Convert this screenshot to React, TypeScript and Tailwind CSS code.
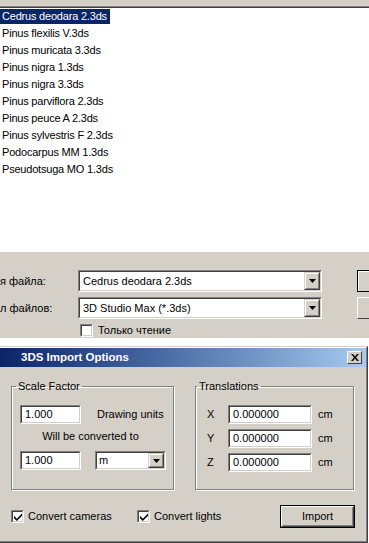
import React from "react";

const items = [
  "Cedrus deodara 2.3ds",
  "Pinus flexilis V.3ds",
  "Pinus muricata 3.3ds",
  "Pinus nigra 1.3ds",
  "Pinus nigra 3.3ds",
  "Pinus parviflora 2.3ds",
  "Pinus peuce A 2.3ds",
  "Pinus sylvestris F 2.3ds",
  "Podocarpus MM 1.3ds",
  "Pseudotsuga MO 1.3ds",
];

function Arrow() {
  return (
    <svg width="7" height="4" viewBox="0 0 7 4">
      <path d="M0 0h7L3.5 4z" fill="#000" />
    </svg>
  );
}

function DropBtn({ h }: { h: string }) {
  return (
    <div className={`w-[16px] ${h} border border-t-[#d4d0c8] border-l-[#d4d0c8] border-b-[#404040] border-r-[#404040] flex shrink-0`}>
      <div className="flex-1 border border-t-white border-l-white border-b-[#808080] border-r-[#808080] bg-[#d4d0c8] flex items-center justify-center">
        <Arrow />
      </div>
    </div>
  );
}

function Sunken({ className, children }: { className: string; children?: React.ReactNode }) {
  return (
    <div className={`border border-t-[#808080] border-l-[#808080] border-b-white border-r-white flex shrink-0 ${className}`}>
      <div className="flex-1 flex items-center border border-t-[#404040] border-l-[#404040] border-b-[#d4d0c8] border-r-[#d4d0c8] bg-white min-w-0">
        {children}
      </div>
    </div>
  );
}

function Check({ checked }: { checked: boolean }) {
  return (
    <div className="w-[13px] h-[13px] shrink-0 border border-t-[#808080] border-l-[#808080] border-b-white border-r-white flex">
      <div className="flex-1 border border-t-[#404040] border-l-[#404040] border-b-[#d4d0c8] border-r-[#d4d0c8] bg-white flex items-center justify-center">
        {checked && (
          <svg width="8" height="8" viewBox="0 0 7 7">
            <path d="M0 2.5l2.5 2.5L7 0.5v2L2.5 7L0 4.5z" fill="#000" />
          </svg>
        )}
      </div>
    </div>
  );
}

export default function App() {
  return (
    <div className="w-[369px] h-[543px] overflow-hidden bg-white font-['Liberation_Sans',Arial,sans-serif] text-[11px] text-black flex flex-col">
      {/* top gray strip */}
      <div className="h-[6px] bg-[#d4d0c8] shrink-0" />
      <div className="h-[1px] bg-[#808080] shrink-0" />
      <div className="h-[1px] bg-[#404040] shrink-0" />
      {/* list */}
      <div className="h-[244px] shrink-0 bg-white pt-[1px]">
        {items.map((t, i) => (
          <div key={t} className="h-[17px] flex items-start">
            <span
              className={`h-[15px] leading-[15px] pl-[2px] pr-[3px] whitespace-nowrap tracking-[-0.2px] ${
                i === 0 ? "bg-[#0a246a] text-white" : ""
              }`}
            >
              {t}
            </span>
          </div>
        ))}
      </div>
      {/* file controls */}
      <div className="h-[86px] shrink-0 bg-[#d4d0c8] border-t border-[#d4d0c8] pt-[17px] flex flex-col">
        <div className="flex items-center h-[22px]">
          <div className="w-[78px] shrink-0 whitespace-nowrap">я файла:</div>
          <Sunken className="w-[244px] h-[22px]">
            <div className="flex-1 pl-[3px] whitespace-nowrap">Cedrus deodara 2.3ds</div>
            <DropBtn h="h-[18px]" />
          </Sunken>
          <div className="ml-[35px] h-[22px] flex-1 border border-black border-r-0 flex">
            <div className="flex-1 border-t border-l border-white bg-[#d4d0c8]" />
          </div>
        </div>
        <div className="flex items-center h-[22px] mt-[5px]">
          <div className="w-[78px] shrink-0 whitespace-nowrap">л файлов:</div>
          <Sunken className="w-[244px] h-[22px]">
            <div className="flex-1 pl-[3px] whitespace-nowrap">3D Studio Max (*.3ds)</div>
            <DropBtn h="h-[18px]" />
          </Sunken>
          <div className="ml-[35px] h-[22px] flex-1 border-t border-l border-white border-b border-b-[#404040]" />
        </div>
        <div className="flex items-center mt-[5px] ml-[80px] h-[13px]">
          <Check checked={false} />
          <span className="ml-[5px] whitespace-nowrap">Только чтение</span>
        </div>
      </div>
      {/* white gap */}
      <div className="h-[8px] shrink-0 bg-white" />
      {/* dialog */}
      <div className="flex-1 flex flex-col bg-[#d4d0c8] border-t border-t-[#d4d0c8] border-r border-r-[#404040] border-b border-b-[#404040] mr-[1px]">
        <div className="flex-1 flex flex-col border-t border-t-white border-r border-r-[#808080] border-b border-b-[#808080]">
          {/* title bar */}
          <div className="h-[19px] shrink-0 bg-gradient-to-r from-[#0a246a] to-[#a6caf0] flex items-center pl-[21px] pr-[4px]">
            <span className="text-white font-bold text-[11.5px] flex-1 whitespace-nowrap">
              3DS Import Options
            </span>
            <div className="w-[15px] h-[13px] border border-t-white border-l-white border-b-[#404040] border-r-[#404040] bg-[#d4d0c8] flex items-center justify-center">
              <svg width="8" height="7" viewBox="0 0 8 7">
                <path d="M0 0h2l2 2.5L6 0h2L5 3.5 8 7H6L4 4.5 2 7H0l3-3.5z" fill="#000" />
              </svg>
            </div>
          </div>
          {/* groups */}
          <div className="flex mt-[12px] pl-[11px]">
            <fieldset className="w-[163px] min-w-0 shrink-0 h-[111px] border border-[#808080] shadow-[1px_1px_0_white,inset_1px_1px_0_white] px-[8px]">
              <legend className="px-[2px] ml-[-4px] leading-[14px]">Scale Factor</legend>
              <div className="flex items-center mt-[12px]">
                <Sunken className="w-[61px] h-[19px]">
                  <span className="pl-[3px]">1.000</span>
                </Sunken>
                <span className="ml-[16px] whitespace-nowrap">Drawing units</span>
              </div>
              <div className="text-center mt-[5px] pr-[4px] leading-[15px] whitespace-nowrap">Will be converted to</div>
              <div className="flex items-center mt-[7px]">
                <Sunken className="w-[61px] h-[19px]">
                  <span className="pl-[3px]">1.000</span>
                </Sunken>
                <Sunken className="w-[71px] h-[19px] ml-[14px]">
                  <span className="pl-[2px] flex-1">m</span>
                  <DropBtn h="h-[15px]" />
                </Sunken>
              </div>
            </fieldset>
            <fieldset className="w-[159px] min-w-0 shrink-0 h-[111px] ml-[21px] border border-[#808080] shadow-[1px_1px_0_white,inset_1px_1px_0_white] pl-[11px] pr-[4px]">
              <legend className="px-[2px] ml-[-10px] leading-[14px]">Translations</legend>
              {["X", "Y", "Z"].map((l, i) => (
                <div key={l} className={`flex items-center ${i === 0 ? "mt-[12px]" : "mt-[5px]"}`}>
                  <span className="w-[21px]">{l}</span>
                  <Sunken className="w-[84px] h-[19px]">
                    <span className="pl-[3px]">0.000000</span>
                  </Sunken>
                  <span className="ml-[6px]">cm</span>
                </div>
              ))}
            </fieldset>
          </div>
          {/* bottom row */}
          <div className="flex items-center mt-[15px] pl-[11px] pr-[11px]">
            <div className="w-[126px] flex items-center shrink-0">
              <Check checked />
              <span className="ml-[4px] whitespace-nowrap">Convert cameras</span>
            </div>
            <div className="flex items-center">
              <Check checked />
              <span className="ml-[4px] whitespace-nowrap">Convert lights</span>
            </div>
            <div className="ml-auto w-[75px] h-[23px] border border-black flex">
              <div className="flex-1 border border-t-white border-l-white border-b-[#404040] border-r-[#404040] flex">
                <div className="flex-1 border border-t-[#d4d0c8] border-l-[#d4d0c8] border-b-[#808080] border-r-[#808080] flex items-center justify-center">
                  Import
                </div>
              </div>
            </div>
          </div>
        </div>
      </div>
    </div>
  );
}
